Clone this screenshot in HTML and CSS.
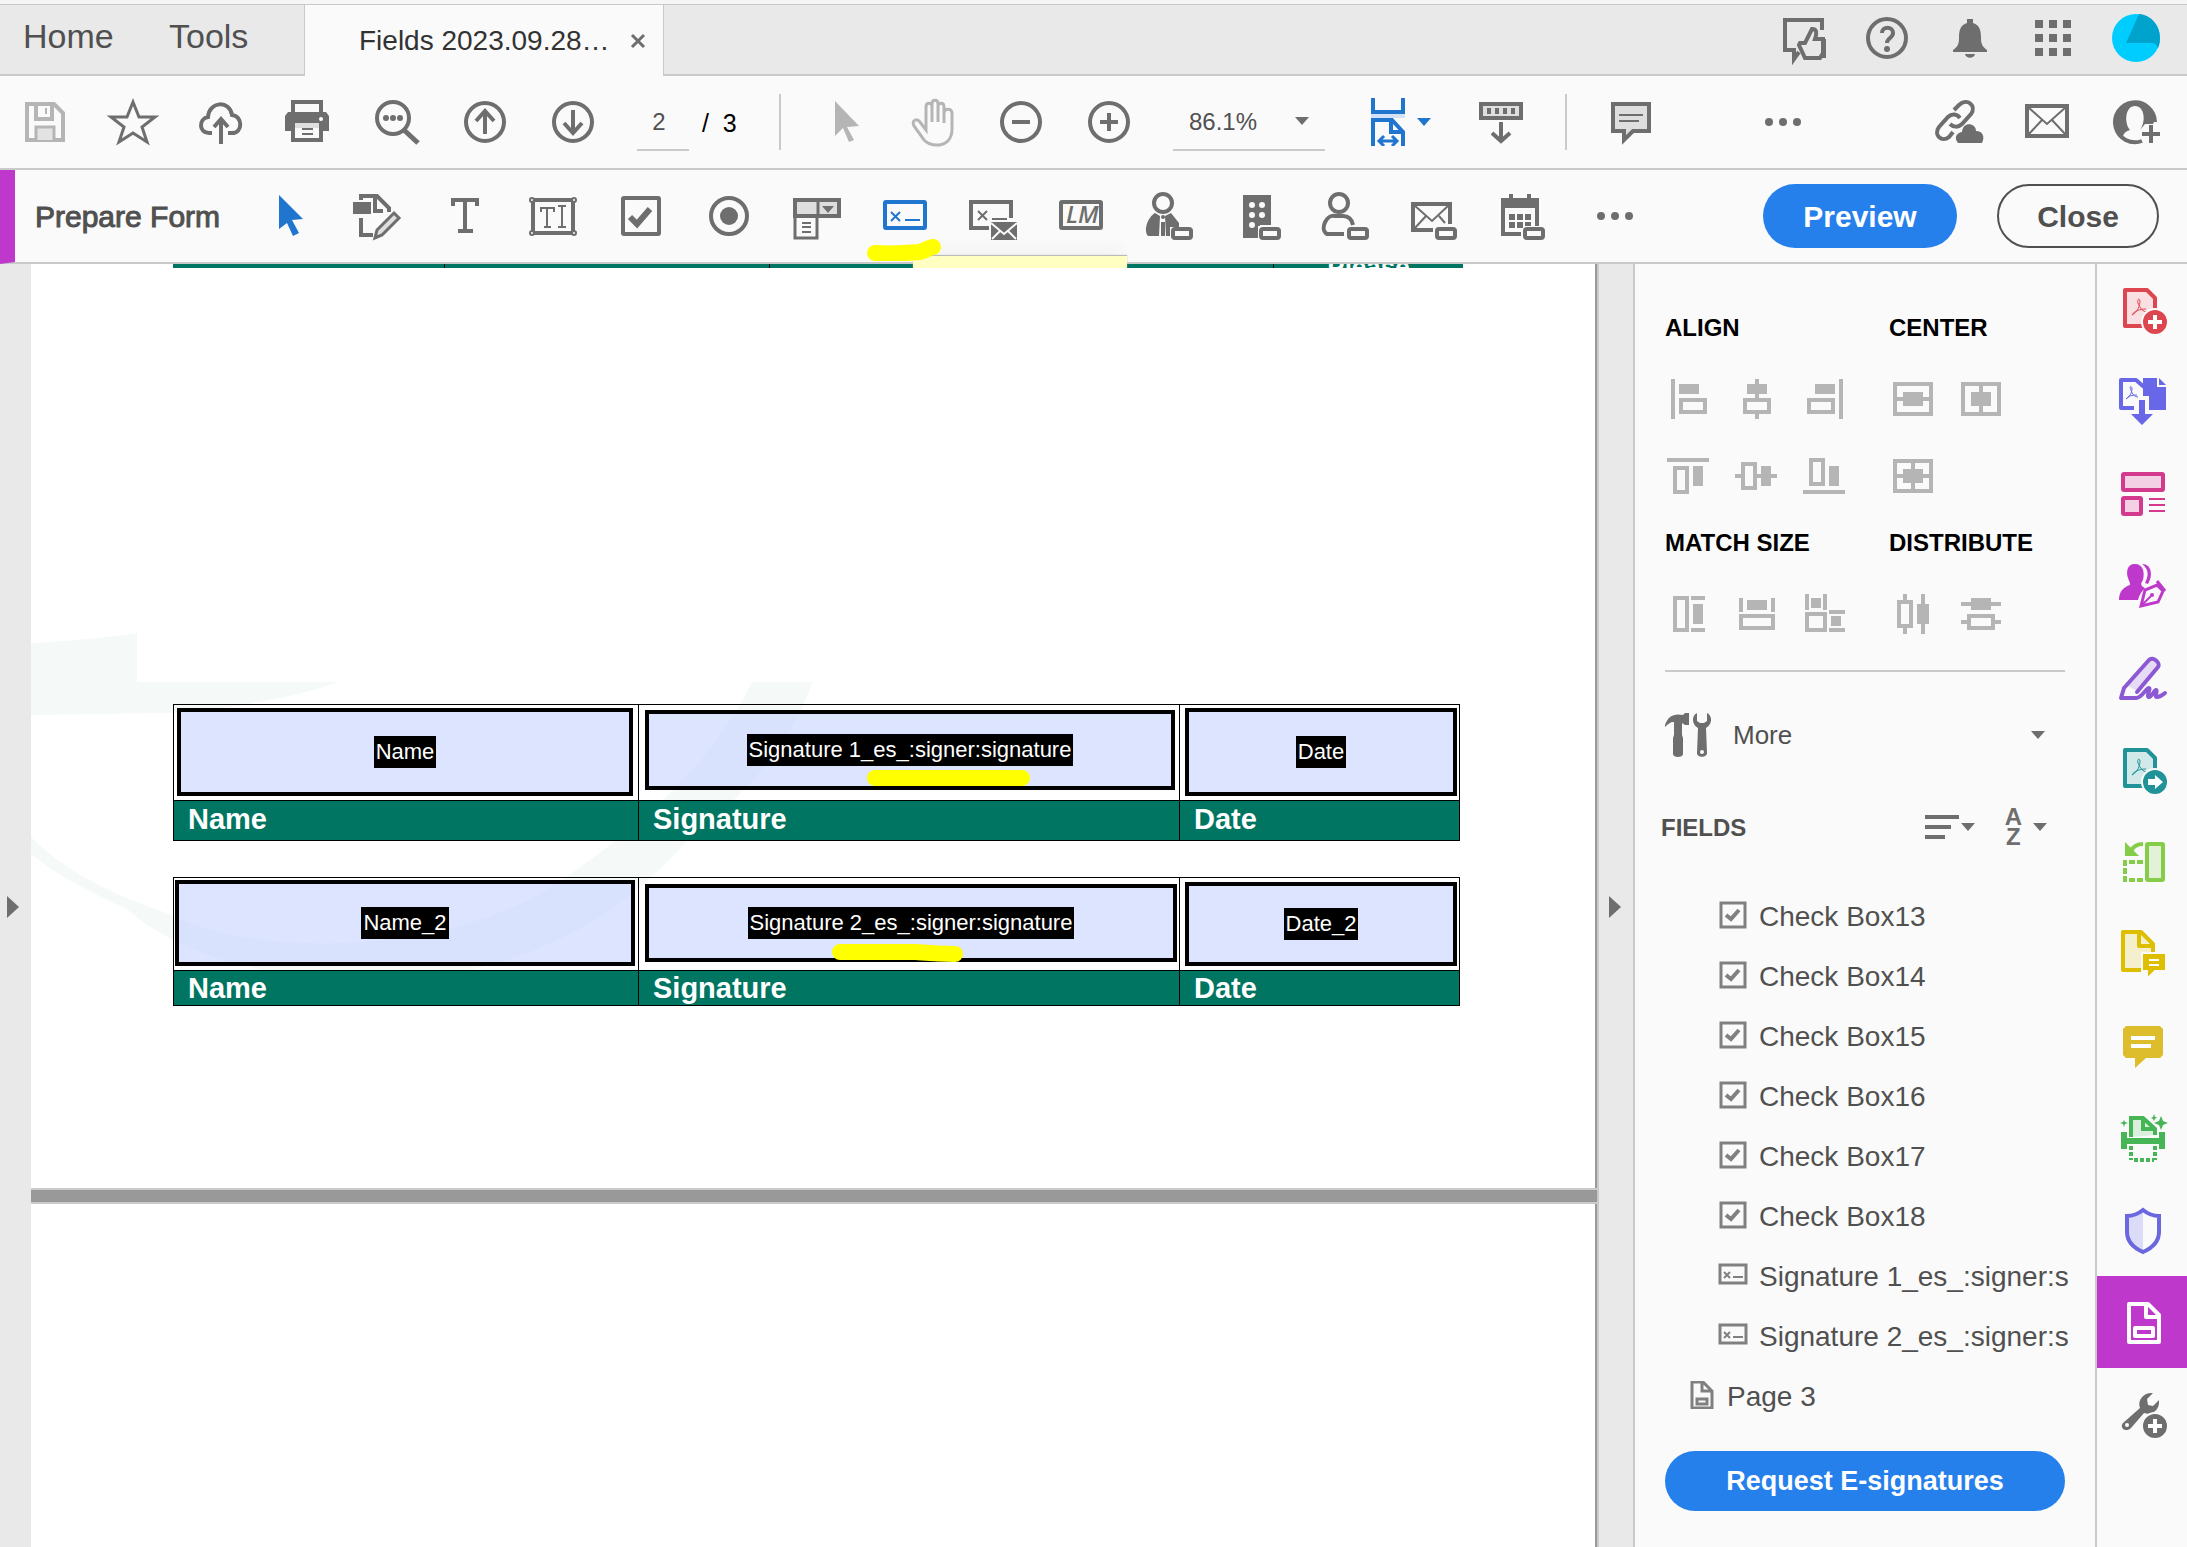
FILE: index.html
```html
<!DOCTYPE html>
<html lang="en">
<head>
<meta charset="utf-8">
<title>Fields 2023.09.28 - Prepare Form</title>
<link rel="stylesheet" href="styles.css">
</head>
<body>
<header class="tabbar">
  <nav class="tabs">
    <a class="nav-link home" href="#">Home</a>
    <a class="nav-link" href="#">Tools</a>
    <div class="doc-tab"><span>Fields 2023.09.28…</span>
      <button class="tab-close" aria-label="Close tab"><svg width="16" height="16" viewBox="0 0 16 16" class="ln"><path d="M2 2l12 12M14 2L2 14" stroke-width="3"/></svg></button>
    </div>
  </nav>
  <div class="account">
    <button aria-label="Feedback"><svg class="ico ln" viewBox="0 0 48 48"><path d="M42 16V6H5v30h9v9l5-7"/><path d="M20 29h5l7-14c5 0 5 4 3 10h8v14l-3 5H25l-6-13z"/><path d="M43 25h3v19h-5z" class="fl"/></svg></button>
    <button aria-label="Help"><svg class="ico ln" viewBox="0 0 48 48"><circle cx="24" cy="24" r="19"/><path d="M19 19c0-7 11-7 11 0 0 5-6 5-6 10"/><circle cx="24" cy="35" r="3" class="fl"/></svg></button>
    <button aria-label="Notifications"><svg class="ico fl" viewBox="0 0 48 48"><path d="M21 5h6v4c7 2 8 8 8 15 0 7 2 9 6 12v2H7v-2c4-3 6-5 6-12 0-7 1-13 8-15zM19 40h10c-1 5-9 5-10 0z"/></svg></button>
    <button aria-label="Apps"><svg class="ico fl" viewBox="0 0 48 48"><path d="M6 6h8v8H6zM20 6h8v8h-8zM34 6h8v8h-8zM6 20h8v8H6zM20 20h8v8h-8zM34 20h8v8h-8zM6 34h8v8H6zM20 34h8v8h-8zM34 34h8v8h-8z"/></svg></button>
    <button aria-label="Profile"><svg class="ico" viewBox="0 0 48 48"><circle cx="24" cy="24" r="24" fill="#00cdff"/><path d="M27 0c12 1 21 11 21 24 0 4-1 8-2 10-1-3-3-5-6-5H14z" fill="#00a3cc"/></svg></button>
  </div>
</header>

<div class="toolbar">
  <button aria-label="Save"><svg class="ico ln pale" viewBox="0 0 48 48"><path d="M7 6h27l9 9v27H7z"/><path d="M16 6v15h16V6" /><path d="M16 42V29h18v13" fill="#e3e3e3" stroke-width="3"/><path d="M26 10v6" stroke-width="2"/></svg></button>
  <button aria-label="Star"><svg class="ico ln" viewBox="0 0 48 48"><path d="M25 4l6 15h16L34 29l5 15-14-9-14 9 5-15L3 19h16z" stroke-width="3"/></svg></button>
  <button aria-label="Upload to cloud"><svg class="ico ln" viewBox="0 0 48 48"><path d="M16 35h-3c-10 0-11-14-1-16C13 3 34 2 36 17c11 1 11 18 0 18h-4"/><path d="M25 46V22M18 29l7-8 7 8"/></svg></button>
  <button aria-label="Print"><svg class="ico" viewBox="0 0 48 48"><path d="M9 16V4h28v12" class="ln"/><path d="M1 18l3-4h38l3 4v15h-8v-8H9v8H1z" class="fl"/><path d="M9 25h28v17H9z" class="ln"/><path d="M11 25h24v5H11z" fill="#dedede"/><path d="M18 31h11M18 36h11" class="ln thin"/><circle cx="37" cy="21" r="2" fill="#fff"/></svg></button>
  <button aria-label="Find"><svg class="ico ln" viewBox="0 0 48 48"><circle cx="21" cy="20" r="16"/><path d="M32 32l14 13" stroke-width="5"/><g class="fl"><circle cx="14" cy="20" r="3"/><circle cx="21" cy="20" r="3"/><circle cx="28" cy="20" r="3"/></g></svg></button>
  <button aria-label="Previous page"><svg class="ico ln" viewBox="0 0 48 48"><circle cx="25" cy="24" r="19"/><path d="M25 36V14M16 23l9-10 9 10"/></svg></button>
  <button aria-label="Next page"><svg class="ico ln" viewBox="0 0 48 48"><circle cx="25" cy="24" r="19"/><path d="M25 12v22M16 25l9 10 9-10"/></svg></button>
  <input class="page-no" aria-label="Page number" value="2">
  <span class="page-total">/&nbsp; 3</span>
  <i class="rule"></i>
  <button aria-label="Select"><svg class="ico" viewBox="0 0 48 48"><path d="M13 3l24 25-12 1 7 13-5 2-6-14-8 8z" fill="#b5b5b5"/></svg></button>
  <button aria-label="Pan"><svg class="ico ln pale" viewBox="0 0 48 48"><path d="M16 26V9c0-5 6-5 6 0v15M22 10V6c0-5 6-5 6 0v18M28 9c0-5 6-5 6 0v16M34 15c0-5 8-5 8 0v16c0 21-25 19-30 8L4 28c-3-6 3-8 6-4l6 8V13" stroke-width="3"/></svg></button>
  <button aria-label="Zoom out"><svg class="ico ln" viewBox="0 0 48 48"><circle cx="23" cy="24" r="19"/><path d="M14 24h18"/></svg></button>
  <button aria-label="Zoom in"><svg class="ico ln" viewBox="0 0 48 48"><circle cx="23" cy="24" r="19"/><path d="M14 24h18M23 15v18"/></svg></button>
  <div class="zoom"><select aria-label="Zoom level"><option>86.1%</option></select><svg class="caret" viewBox="0 0 14 8"><path d="M0 0h14L7 8z"/></svg></div>
  <button class="fit" aria-label="Fit width"><svg width="34" height="48" viewBox="0 0 34 48" fill="none" stroke="#2075cf" stroke-width="4"><path d="M0 18h34" stroke="#d3e3f5"/><path d="M2 0v14h30V0M2 48V22h19l11 12v14M20 22v12h12"/><path d="M9 43h16M13 38l-5 5 5 5M21 38l5 5-5 5" stroke-width="3"/></svg><svg class="caret blue" viewBox="0 0 14 8"><path d="M0 0h14L7 8z"/></svg></button>
  <button class="scrollbtn" aria-label="Scrolling"><svg class="ico ln" viewBox="0 0 48 48"><path d="M4 6h40v14H4z" fill="#dedede"/><path d="M12 10v6M20 10v6M28 10v6M36 10v6M24 24v19M15 35l9 8 9-8"/></svg></button>
  <i class="rule second"></i>
  <button aria-label="Comment"><svg class="ico ln" viewBox="0 0 48 48"><path d="M6 6h36v27H26l-9 9v-9H6z" fill="#dedede"/><path d="M12 17h24M12 23h20" stroke-width="2"/></svg></button>
  <button class="more-dots" aria-label="More tools"><svg class="ico fl" viewBox="0 0 48 48"><circle cx="10" cy="24" r="4"/><circle cx="24" cy="24" r="4"/><circle cx="38" cy="24" r="4"/></svg></button>
  <div class="share">
    <button aria-label="Share link"><svg class="ico ln" viewBox="0 0 48 48"><path d="M19 12l5-5c8-8 18 1 12 9l-9 10c-4 4-9 3-12 0"/><path d="M18 34l-4 5c-7 6-16-2-10-10l9-10c4-4 9-3 12 1"/><path d="M23 45c-5-6 0-11 4-11 1-11 14-9 14-1 7 0 9 6 6 12z" class="fl"/></svg></button>
    <button aria-label="Send mail"><svg class="ico ln" viewBox="0 0 48 48"><path d="M4 8h40v30H4z"/><path d="M5 9l19 17L43 9M5 37l14-15M43 37L29 22" stroke-width="2"/></svg></button>
    <button aria-label="Add people"><svg class="ico ln" viewBox="0 0 48 48"><path d="M31 43a20 20 0 1 1 13-19"/><path d="M24 4C9 4 4 17 4 25c1 7 4 11 8 13 1-3 3-5 7-6-6-7-5-24 5-24s11 16 5 24l5-6h8l2-4C44 14 37 5 24 4z" class="fl"/><path d="M40 27v18M31 36h18" /></svg></button>
  </div>
</div>

<div class="toolbar form-bar">
  <h1>Prepare Form</h1>
  <button aria-label="Select object"><svg class="ico" viewBox="0 0 48 48"><path d="M14 3l24 24-11 1 7 13-6 3-6-13-8 6z" fill="#2075cf"/></svg></button>
  <button aria-label="Edit"><svg class="ico ln" viewBox="0 0 48 48"><path d="M8 8V4h16l12 12v4M22 4v15h8M8 26v17h12"/><path d="M0 10h18v12H0z" class="fl"/><path d="M24 38l17-17 5 5-17 17-7 3z" fill="#dedede" stroke-width="3"/></svg></button>
  <button aria-label="Text"><svg class="ico ln" viewBox="0 0 48 48"><path d="M12 14V8h24v6M24 8v31M17 39h15"/></svg></button>
  <button aria-label="Text field"><svg class="ico ln" viewBox="0 0 48 48"><path d="M4 8h40v33H4z"/><path d="M12 20v-4h13v4M18 16v19M15 35h7M29 14h8M29 35h8M33 14v21" stroke-width="2"/><g fill="#fafafa" stroke-width="2"><circle cx="3" cy="8" r="2"/><circle cx="45" cy="8" r="2"/><circle cx="3" cy="41" r="2"/><circle cx="45" cy="41" r="2"/></g></svg></button>
  <button aria-label="Check box"><svg class="ico ln" viewBox="0 0 48 48"><rect x="6" y="6" width="36" height="36" rx="1"/><path d="M13 25l7 7 13-15" stroke-width="6"/></svg></button>
  <button aria-label="Radio button"><svg class="ico ln" viewBox="0 0 48 48"><circle cx="24" cy="24" r="18"/><circle cx="24" cy="24" r="9" class="fl"/></svg></button>
  <button aria-label="Dropdown"><svg class="ico ln" viewBox="0 0 48 48"><path d="M2 8h44v16H2z" fill="#dedede"/><path d="M2 24v22h22V24M25 8v16" stroke-width="3"/><path d="M9 31h9M9 35h9M9 40h9" stroke-width="2"/><path d="M29 14h12l-6 7z" class="fl"/></svg></button>
  <button class="sig-tool" aria-label="Signature"><svg class="ico" viewBox="0 0 48 48" fill="none" stroke="#2075cf" stroke-width="4"><rect x="4" y="10" width="40" height="26" rx="1"/><path d="M10 20l9 9M19 20l-9 9M24 28h15" stroke-width="2"/></svg>
    <svg class="marker" viewBox="0 0 78 22"><path d="M10 14c17 1 34 0 44-1 6-1 8-4 14-5" /></svg>
  </button>
  <button aria-label="E-signature by mail"><svg class="ico ln" viewBox="0 0 48 48"><path d="M20 36H2V10h40v16"/><path d="M9 19l9 9M18 19l-9 9M23 27h15" stroke-width="2"/><path d="M22 30h26v18H22z" class="fl"/><path d="M22 31l13 11 13-11M23 47l8-8M47 47l-8-8" stroke="#fafafa" stroke-width="2"/></svg></button>
  <button aria-label="Initials"><svg class="ico ln" viewBox="0 0 48 48"><rect x="4" y="10" width="40" height="26" rx="1"/><text x="9" y="31" class="lm">LM</text></svg></button>
  <button aria-label="Title"><svg class="ico ln" viewBox="0 0 48 48"><ellipse cx="18" cy="11" rx="9" ry="9"/><path d="M10 21l5 3-1 20H3c-5-6 0-19 7-23zM26 21l8 10v4h-9v9h-4l-1-20z" class="fl"/><path d="M18 30v14"/><circle cx="18" cy="25" r="2" class="fl"/><rect x="28" y="37" width="18" height="9" rx="2" fill="#fafafa"/></svg></button>
  <button aria-label="Company"><svg class="ico ln" viewBox="0 0 48 48"><path d="M10 3h28v30H27v13H10z" class="fl"/><g fill="#fafafa" stroke="none"><circle cx="19" cy="13" r="3"/><circle cx="29" cy="13" r="3"/><circle cx="19" cy="23" r="3"/><circle cx="29" cy="23" r="3"/><circle cx="19" cy="33" r="3"/></g><rect x="25" y="34" width="24" height="14" fill="#fafafa" stroke="none"/><rect x="28" y="37" width="18" height="9" rx="2"/></svg></button>
  <button aria-label="Name"><svg class="ico ln" viewBox="0 0 48 48"><ellipse cx="18" cy="11" rx="9" ry="9"/><path d="M23 42H6c-8-5 0-20 8-18h8c6 0 9 4 10 9"/><rect x="28" y="37" width="18" height="9" rx="2"/></svg></button>
  <button aria-label="Email"><svg class="ico ln" viewBox="0 0 48 48"><path d="M24 38H4V12h37v20"/><path d="M5 13l18 16 17-16M5 37l12-13M30 24l6 7" stroke-width="2"/><rect x="28" y="37" width="18" height="9" rx="2"/></svg></button>
  <button aria-label="Date"><svg class="ico ln" viewBox="0 0 48 48"><path d="M24 42H6V8h34v26"/><path d="M5 7h36v9H5zM12 22h6v6h-6zM20 22h6v6h-6zM28 22h6v6h-6zM12 30h6v6h-6zM20 30h6v6h-6zM28 30h6v4h-6z" class="fl"/><path d="M14 2v7M32 2v7"/><rect x="28" y="37" width="18" height="9" rx="2" fill="#fafafa"/></svg></button>
  <button class="form-dots" aria-label="More fields"><svg class="ico fl" viewBox="0 0 48 48"><circle cx="10" cy="24" r="4"/><circle cx="24" cy="24" r="4"/><circle cx="38" cy="24" r="4"/></svg></button>
  <div class="actions">
    <button class="pill primary">Preview</button>
    <button class="pill outline">Close</button>
  </div>
  <div class="tip"></div>
</div>

<main class="work">
  <button class="gutter left" aria-label="Show navigation pane"><svg width="12" height="22" viewBox="0 0 12 22" class="fl"><path d="M0 0l12 11L0 22z"/></svg></button>
  <section class="doc">
    <article class="page">
      <svg class="watermark" width="1000" height="760" viewBox="0 0 1000 760" fill="#f5faf9"><path d="M0 379q60-3 106-10v49h201c-50 18-120 28-169 31L0 451zM721 418h61C750 500 700 540 657 576c-40 44-90 90-180 120-130 40-300 20-380-50-40-20-65-30-97-56v-17c40 40 90 60 141 78 90 45 290 40 397-40C640 540 690 480 721 418z"/></svg>
      <div class="strip"><i></i><i></i><i></i><b>Please</b></div>
      <table class="sign first">
        <colgroup><col class="c-name"><col class="c-sig"><col></colgroup>
        <tbody>
          <tr><td class="a"><div class="field"><span>Name</span></div></td>
            <td class="b"><div class="field"><span>Signature 1_es_:signer:signature</span><svg class="hl one" viewBox="0 0 165 18"><path d="M9 9h147"/></svg></div></td>
            <td class="c"><div class="field"><span>Date</span></div></td></tr>
          <tr><th>Name</th><th>Signature</th><th>Date</th></tr>
        </tbody>
      </table>
      <table class="sign second">
        <colgroup><col class="c-name"><col class="c-sig"><col></colgroup>
        <tbody>
          <tr><td class="a"><div class="field"><span>Name_2</span></div></td>
            <td class="b"><div class="field"><span>Signature 2_es_:signer:signature</span><svg class="hl two" viewBox="0 0 131 20"><path d="M8 9h76c12 1 18 2 39 2"/></svg></div></td>
            <td class="c"><div class="field"><span>Date_2</span></div></td></tr>
          <tr><th>Name</th><th>Signature</th><th>Date</th></tr>
        </tbody>
      </table>
    </article>
    <div class="page-gap"></div>
    <article class="page next"></article>
  </section>
  <button class="gutter right" aria-label="Hide tools pane"><svg width="12" height="22" viewBox="0 0 12 22" class="fl"><path d="M0 0l12 11L0 22z"/></svg></button>

  <aside class="panel">
    <div class="arrange">
      <section><h2>ALIGN</h2>
        <div class="icons">
          <svg class="ico g" viewBox="0 0 48 48"><path d="M8 4v40"/><path d="M14 9h20v10H14z" class="s"/><path d="M16 25h24v12H16z"/></svg>
          <svg class="ico g" viewBox="0 0 48 48"><path d="M24 4v19M24 39v5"/><path d="M14 9h20v10H14z" class="s"/><path d="M12 25h24v12H12z"/></svg>
          <svg class="ico g" viewBox="0 0 48 48"><path d="M40 4v40"/><path d="M14 9h20v10H14z" class="s"/><path d="M8 25h24v12H8z"/></svg>
          <svg class="ico g" viewBox="0 0 48 48"><path d="M2 8h42M10 16h12v24H10z"/><path d="M28 14h10v20H28z" class="s"/></svg>
          <svg class="ico g" viewBox="0 0 48 48"><path d="M2 24h8M24 24h20M10 12h12v24H10z"/><path d="M28 14h10v20H28z" class="s"/></svg>
          <svg class="ico g" viewBox="0 0 48 48"><path d="M2 40h42M10 8h12v24H10z"/><path d="M28 14h10v20H28z" class="s"/></svg>
        </div></section>
      <section><h2>CENTER</h2>
        <div class="icons">
          <svg class="ico g" viewBox="0 0 48 48"><path d="M6 9h36v30H6zM6 24h36"/><path d="M14 17h20v14H14z" class="s"/></svg>
          <svg class="ico g" viewBox="0 0 48 48"><path d="M6 9h36v30H6zM24 9v30"/><path d="M14 17h20v14H14z" class="s"/></svg>
          <svg class="ico g" viewBox="0 0 48 48"><path d="M6 9h36v30H6zM24 9v30M6 24h36"/><path d="M14 17h20v14H14z" class="s"/></svg>
        </div></section>
      <section><h2>MATCH SIZE</h2>
        <div class="icons">
          <svg class="ico g" viewBox="0 0 48 48"><path d="M10 8h12v32H10zM26 8h14M26 40h14"/><path d="M28 14h10v20H28z" class="s"/></svg>
          <svg class="ico g" viewBox="0 0 48 48"><path d="M8 8v14M40 8v14M8 26h32v12H8z"/><path d="M14 10h20v10H14z" class="s"/></svg>
          <svg class="ico g" viewBox="0 0 48 48"><path d="M6 4v16M24 4v16M6 24h18v16H6zM28 22h16M28 40h16"/><path d="M10 8h10v10H10zM30 26h10v10H30z" class="s"/></svg>
        </div></section>
      <section><h2>DISTRIBUTE</h2>
        <div class="icons">
          <svg class="ico g" viewBox="0 0 48 48"><path d="M10 12h12v24H10zM16 4v8M16 36v8M34 4v40"/><path d="M28 14h12v20H28z" class="s"/></svg>
          <svg class="ico g" viewBox="0 0 48 48"><path d="M4 14h40M4 32h8M36 32h8M12 26h24v12H12z"/><path d="M14 8h20v12H14z" class="s"/></svg>
        </div></section>
    </div>
    <button class="more"><svg width="46" height="44" viewBox="0 0 46 44" class="fl"><path d="M0 12C3 3 9 0 18 2l2-2h4v12h-4l-3-2v12l1 3v16c0 4-10 4-10 0V25l1-3V9C5 9 3 11 0 14zM32 0c-6 3-5 12 1 15l-1 25c0 5 10 5 10 0l-1-25c6-3 7-12 1-15v8l-3 2h-4l-3-2z"/><circle cx="37" cy="39" r="2" fill="#fafafa"/></svg><span>More</span><svg class="caret" viewBox="0 0 14 8"><path d="M0 0h14L7 8z"/></svg></button>
    <div class="fields-head"><h2>FIELDS</h2>
      <button class="sort" aria-label="Field order"><svg width="34" height="24" viewBox="0 0 34 24" class="ln"><path d="M0 2h34M0 12h26M0 22h20"/></svg><svg class="caret" viewBox="0 0 14 8"><path d="M0 0h14L7 8z"/></svg></button>
      <button class="az" aria-label="Sort A to Z"><span>A<br>Z</span><svg class="caret" viewBox="0 0 14 8"><path d="M0 0h14L7 8z"/></svg></button>
    </div>
    <ul class="tree">
      <li><svg class="mini" viewBox="0 0 30 28"><path d="M3 2h24v24H3z"/><path d="M8 14l5 4 8-9" stroke-width="4"/></svg>Check Box13</li>
      <li><svg class="mini" viewBox="0 0 30 28"><path d="M3 2h24v24H3z"/><path d="M8 14l5 4 8-9" stroke-width="4"/></svg>Check Box14</li>
      <li><svg class="mini" viewBox="0 0 30 28"><path d="M3 2h24v24H3z"/><path d="M8 14l5 4 8-9" stroke-width="4"/></svg>Check Box15</li>
      <li><svg class="mini" viewBox="0 0 30 28"><path d="M3 2h24v24H3z"/><path d="M8 14l5 4 8-9" stroke-width="4"/></svg>Check Box16</li>
      <li><svg class="mini" viewBox="0 0 30 28"><path d="M3 2h24v24H3z"/><path d="M8 14l5 4 8-9" stroke-width="4"/></svg>Check Box17</li>
      <li><svg class="mini" viewBox="0 0 30 28"><path d="M3 2h24v24H3z"/><path d="M8 14l5 4 8-9" stroke-width="4"/></svg>Check Box18</li>
      <li><svg class="mini" viewBox="0 0 30 28"><path d="M2 4h26v18H2z"/><path d="M6 11l6 6M12 11l-6 6M15 16h10" stroke-width="2"/></svg>Signature 1_es_:signer:s</li>
      <li><svg class="mini" viewBox="0 0 30 28"><path d="M2 4h26v18H2z"/><path d="M6 11l6 6M12 11l-6 6M15 16h10" stroke-width="2"/></svg>Signature 2_es_:signer:s</li>
      <li class="pg"><svg class="mini" viewBox="0 0 30 28"><path d="M5 1h11l9 9v17H5zM15 1v9h9M10 18h10v5H10z"/></svg>Page 3</li>
    </ul>
    <button class="request">Request E-signatures</button>
  </aside>

  <nav class="rail">
    <a href="#" aria-label="Create PDF"><svg class="ico" viewBox="0 0 48 48" fill="none" stroke="#de464f" stroke-width="4"><path d="M7 4h22l8 8v28H7z" fill="#f9dfe1" stroke-linejoin="round"/><path d="M14 29c6-3 8-10 8-14-1-4-3-1-2 2 2 5 5 9 9 9M14 29c2-4 8-6 14-6" stroke-width="1"/><circle cx="37" cy="36" r="13" fill="#de464f" stroke="#fafafa" stroke-width="2"/><path d="M37 29v14M30 36h14" stroke="#fff"/></svg></a>
    <a href="#" aria-label="Export PDF"><svg class="ico" viewBox="0 0 48 48" fill="none" stroke="#6767e8" stroke-width="4"><path d="M16 30H3V2h15l8 7" stroke-linejoin="round"/><path d="M8 21c5-3 6-8 6-11-1-3-3-1-1 2 1 4 4 7 7 7M8 21c2-3 6-4 11-4" stroke-width="1"/><path d="M25 0h14v9h9v23H31V18h-6z" fill="#6767e8" stroke="none"/><path d="M41 0l7 7h-7z" fill="#6767e8" stroke="none"/><path d="M21 22h6v14h8L24 47 13 36h8z" fill="#6767e8" stroke="none"/></svg></a>
    <a href="#" aria-label="Organize pages"><svg class="ico" viewBox="0 0 48 48" fill="#f3d0e4" stroke="#d3398d" stroke-width="4"><rect x="5" y="4" width="40" height="16" rx="1"/><rect x="5" y="28" width="18" height="16" rx="1"/><path d="M31 29h16M31 35h16M31 41h16" stroke-width="2"/></svg></a>
    <a href="#" aria-label="Request signatures"><svg class="ico" viewBox="0 0 48 48" fill="#bf38cc"><path d="M17 2c-8 0-9 8-7 14 1 3 2 4 2 7-6 2-11 6-11 15h19c1-5 4-9 7-12-4-2-5-4-2-8C27 10 25 2 17 2zM24 2c10 0 11 12 6 20l-3-1c3-6 5-13-3-19z"/><path d="M23 44l4-16 12-5 6 6-5 11zM39 19l8 10" fill="#fafafa" stroke="#bf38cc" stroke-width="3"/><path d="M24 43l9-9" stroke="#bf38cc" stroke-width="2"/><circle cx="34" cy="33" r="2"/></svg></a>
    <a href="#" aria-label="Fill and sign"><svg class="ico" viewBox="0 0 48 48" fill="none" stroke="#8d58d3" stroke-width="4" stroke-linejoin="round" stroke-linecap="round"><path d="M10 32L30 7c4-5 15 2 10 8L21 38z" fill="#e6dbf5" stroke="none"/><path d="M19 38l21-25c3-4-5-11-9-7L6 34 3 44h15c6 0 10-10 13-10 2 0-3 9 0 9s5-7 7-7-2 7 1 7 4-1 8-4"/></svg></a>
    <a href="#" aria-label="Send for review"><svg class="ico" viewBox="0 0 48 48" fill="none" stroke="#1f9398" stroke-width="4"><path d="M7 4h22l8 8v28H7z" fill="#d2e9ea" stroke-linejoin="round"/><path d="M14 29c6-3 8-10 8-14-1-4-3-1-2 2 2 5 5 9 9 9M14 29c2-4 8-6 14-6" stroke-width="1"/><circle cx="37" cy="36" r="13" fill="#1f9398" stroke="#fafafa" stroke-width="2"/><path d="M30 33h7v-4l8 7-8 7v-4h-7z" fill="#fff" stroke="none"/></svg></a>
    <a href="#" aria-label="Compare files"><svg class="ico" viewBox="0 0 48 48" fill="none" stroke="#85cd48" stroke-width="4"><rect x="29" y="6" width="16" height="36" rx="1" fill="#e3f1d6"/><path d="M7 22v22" stroke-dasharray="6 2"/><path d="M11 24h14M11 42h14" stroke-dasharray="6 2"/><path d="M25 6c-7 0-10 3-12 7" /><path d="M7 4v14h14z" fill="#85cd48" stroke="none"/></svg></a>
    <a href="#" aria-label="Share for comments"><svg class="ico" viewBox="0 0 48 48" fill="none" stroke="#debf00" stroke-width="4"><path d="M5 2h18l12 12v26H5z" fill="#f5efcd" stroke-linejoin="round"/><path d="M21 2v14h14" stroke-linejoin="round"/><path d="M24 23h24v18H37l-8 8v-8h-5z" fill="#debf00" stroke="#fafafa" stroke-width="2"/><path d="M31 30h10M31 35h10" stroke="#fff" stroke-width="2"/></svg></a>
    <a href="#" aria-label="Comment"><svg class="ico" viewBox="0 0 48 48" fill="#debd2d"><path d="M8 4h34l3 3v26l-3 3H28L17 46V36H8l-3-3V7z"/><path d="M13 16h24M13 24h20" stroke="#fff" stroke-width="4"/></svg></a>
    <a href="#" aria-label="Scan and OCR"><svg class="ico" viewBox="0 0 48 48" fill="none" stroke="#46b556" stroke-width="4"><path d="M13 23V4h12l12 11v6" fill="#daf0dd"/><path d="M25 4v11h12" /><path d="M3 18h6v6h32v-6h6v17h-6v-5H9v5H3z" fill="#46b556" stroke="none"/><path d="M13 32v14M37 32v14M16 46h20" stroke-dasharray="4 2"/><path d="M43 2l2 5 5 2-5 2-2 5-2-5-5-2 5-2zM6 6l1 2 3 1-3 1-1 3-1-3-3-1 3-1zM36 0l1 3 2 0-2 2-1 2-1-2-2-1 2-1z" fill="#46b556" stroke="none"/></svg></a>
    <a href="#" aria-label="Protect"><svg class="ico" viewBox="0 0 48 48" fill="none" stroke="#6a67df" stroke-width="4"><path d="M25 5v41C14 41 9 35 9 26V11c6 0 11-2 16-6z" fill="#dcdcf8" stroke="none"/><path d="M25 4c5 4 10 6 16 6v16c0 10-7 16-16 20C16 42 9 36 9 26V10c6 0 11-2 16-6z"/></svg></a>
    <a href="#" class="on" aria-label="Prepare form"><svg class="ico" viewBox="0 0 48 48" fill="none" stroke="#fff" stroke-width="4" stroke-linejoin="round"><path d="M11 6h19l11 11v27H11zM28 6v13h13M17 30h18v8H17z"/></svg></a>
    <a href="#" aria-label="More tools"><svg class="ico fl" viewBox="0 0 48 48"><path d="M35 3c-9-1-16 7-13 15L5 33c-4 5 3 10 8 5l13-15c8 3 16-3 15-13l-6 6-5-1-1-6z"/><circle cx="9" cy="35" r="2" fill="#fafafa"/><circle cx="37" cy="36" r="13" stroke="#fafafa" stroke-width="2"/><path d="M37 29v14M30 36h14" stroke="#fff" stroke-width="4"/></svg></a>
  </nav>
</main>
</body>
</html>
```
FILE: styles.css
```css
* { box-sizing: border-box; }
body {
  margin: 0;
  min-height: 100vh;
  display: flex;
  flex-direction: column;
  background: #fafafa;
  color: #505050;
  font-family: "Liberation Sans", Arial, sans-serif;
  font-size: 28px;
  overflow-x: hidden;
}
button {
  border: 0;
  padding: 0;
  background: none;
  color: inherit;
  font: inherit;
  display: flex;
  align-items: center;
  justify-content: center;
}
a { color: inherit; text-decoration: none; }
h1, h2, ul { margin: 0; padding: 0; }
h2 { font-size: 24px; line-height: 28px; color: #000; }
svg { display: block; flex: none; }

/* Icons */
.ico { width: 48px; height: 48px; overflow: visible; }
.ln { fill: none; stroke: #6e6e6e; stroke-width: 4; }
.ln.pale { stroke: #b5b5b5; }
.ln.thin { stroke-width: 2; }
.fl { fill: #6e6e6e; stroke: none; }
.g { fill: none; stroke: #b5b5b5; stroke-width: 4; }
.g .s { fill: #b5b5b5; stroke: none; }
.lm { font-size: 24px; font-style: italic; font-weight: 600; fill: #6e6e6e; stroke: none; font-family: "Open Sans", sans-serif; }
.caret { width: 14px; height: 8px; fill: #6e6e6e; }
.caret.blue { fill: #2075cf; }

/* Tab bar */
.tabbar {
  display: flex;
  justify-content: space-between;
  height: 76px;
  border-top: 4px solid #f6f6f6;
  background: #e9e9e9;
  box-shadow: inset 0 1px #c8c8c8, inset 0 -2px #cacaca;
}
.tabs { display: flex; }
.nav-link { font-size: 34px; line-height: 65px; width: 135px; }
.nav-link.home { width: 169px; padding-left: 23px; }
.doc-tab {
  display: flex;
  align-items: center;
  justify-content: space-between;
  width: 360px;
  margin-top: 1px;
  padding: 0 17px 0 54px;
  border: solid #cacaca;
  border-width: 0 1px;
  background: #fafafa;
  color: #323232;
}
.account { display: flex; padding-right: 10px; height: 68px; }
.account button { width: 83px; }

/* Toolbars */
.toolbar {
  position: relative;
  display: flex;
  align-items: center;
  height: 94px;
  border-bottom: 2px solid #cacaca;
  background: #fafafa;
}
.toolbar > button, .share button { width: 88px; height: 92px; flex: none; }
.page-no {
  width: 52px;
  height: 58px;
  margin-left: 21px;
  padding: 2px 8px 0 0;
  border: 0;
  border-bottom: 2px solid #cacaca;
  background: none;
  color: #505050;
  font: inherit;
  font-size: 24px;
  text-align: center;
}
.page-total { width: 78px; padding: 2px 0 0 13px; color: #000; font-size: 25px; white-space: nowrap; }
.rule { width: 2px; height: 56px; margin: 0 21px 0 12px; background: #cacaca; }
.rule.second { margin: 0 20px; }
.zoom {
  display: flex;
  align-items: center;
  width: 152px;
  height: 58px;
  margin: 0 32px 0 19px;
  padding-right: 16px;
  border-bottom: 2px solid #cacaca;
}
.zoom select {
  flex: 1;
  appearance: none;
  border: 0;
  padding: 0 0 0 16px;
  background: none;
  color: #505050;
  font: inherit;
  font-size: 24px;
}
.toolbar .fit { gap: 12px; margin-right: 12px; }
.toolbar .more-dots { margin-left: 64px; }
.share { display: flex; margin-left: auto; padding-right: 8px; }

.form-bar { border-left: 15px solid #bf38cc; }
.form-bar h1 { width: 230px; padding: 2px 0 0 20px; font-size: 30px; font-weight: normal; white-space: nowrap; -webkit-text-stroke: 1px #505050; }
.sig-tool { position: relative; z-index: 2; }
.marker { position: absolute; left: 4px; top: 69px; width: 78px; height: 22px; }
.marker path, .hl path { fill: none; stroke: #ff0; stroke-width: 16; stroke-linecap: round; }
.form-bar .form-dots { width: 100px; }
.actions { display: flex; gap: 40px; margin-left: auto; padding-right: 28px; }
.pill { height: 64px; padding-top: 2px; border-radius: 32px; font-size: 30px; font-weight: bold; }
.primary { width: 194px; background: #2680eb; color: #fff; }
.outline { width: 162px; border: 2px solid #505050; }
.tip {
  position: absolute;
  left: 898px;
  top: 86px;
  width: 214px;
  height: 12px;
  z-index: 1;
  background: #ffffc1;
  box-shadow: 0 -1px 1px #bbb, 0 -8px 16px -4px rgba(0, 0, 0, .1);
}

/* Work area */
.work { flex: 1; display: grid; grid-template-columns: 31px minmax(0, 1fr) 38px 460px 92px; }
.gutter { background: #e9e9e9; }
.gutter.left { padding: 2px 5px 0 0; }
.gutter.right { border: solid #cacaca; border-width: 0 2px; padding: 2px 2px 0 0; }
.doc { display: flex; flex-direction: column; background: #999; }
.page { position: relative; background: #fff; border-right: 2px solid #999; min-height: 924px; }
.page.next { flex: 1; min-height: 0; }
.page-gap { height: 16px; border: solid #cacaca; border-width: 2px 0; background: #999; }
.watermark { position: absolute; left: 0; top: 0; }
.strip {
  position: relative;
  display: grid;
  grid-template-columns: 272px 325px 504px 1fr;
  height: 4px;
  margin: 0 132px 0 142px;
  overflow: hidden;
  background: #007662;
  color: #fff;
  font-size: 26px;
}
.strip i { border-right: 1px solid #000; }
.strip b { line-height: 18px; text-align: center; margin-top: -6px; }
.sign {
  position: relative;
  width: calc(100% - 277px);
  margin-left: 142px;
  table-layout: fixed;
  border-collapse: collapse;
}
.first { margin-top: 436px; }
.second { margin-top: 36px; }
.c-name { width: 465px; }
.c-sig { width: 541px; }
.sign td, .sign th { border: 1px solid #000; }
.sign td { padding: 0; vertical-align: top; }
.sign th {
  height: 40px;
  padding: 0 14px 3px;
  background: #007662;
  color: #fff;
  font-size: 29px;
  line-height: 32px;
  text-align: left;
}
.second th { height: 35px; padding-bottom: 0; }
.field {
  position: relative;
  display: flex;
  align-items: center;
  justify-content: center;
  height: 88px;
  margin: 3px 5px 4px 3px;
  border: 4px solid #000;
  background: rgba(193, 206, 255, .55);
}
.field span { padding: 0 2px; background: #000; color: #fff; font-size: 22px; line-height: 32px; white-space: nowrap; }
.b .field { height: 80px; margin: 5px 4px 10px 6px; }
.c .field { margin: 3px 2px 4px 5px; }
.second .a .field { height: 86px; margin: 2px 3px 4px 1px; }
.second .b .field { height: 78px; margin: 6px 2px 8px 6px; }
.second .c .field { height: 84px; margin: 4px 2px 4px 5px; }
.hl { position: absolute; overflow: visible; }
.hl.one { left: 217px; top: 55px; width: 165px; height: 18px; }
.hl.two { left: 183px; top: 55px; width: 131px; height: 20px; }

/* Right panel */
.panel { padding: 50px 30px 0 30px; background: #fafafa; }
.arrange {
  display: grid;
  grid-template-columns: 224px 1fr;
  row-gap: 29px;
  padding-bottom: 32px;
  border-bottom: 2px solid #cacaca;
}
.icons { display: grid; grid-template-columns: repeat(3, 68px); row-gap: 29px; padding-top: 33px; }
.arrange section:nth-child(2) .icons { grid-template-columns: repeat(2, 68px); }
.more { width: 100%; height: 64px; margin-top: 31px; padding-right: 20px; font-size: 26px; justify-content: flex-start; }
.more span { flex: 1; padding-left: 22px; text-align: left; }
.fields-head { display: flex; align-items: center; height: 60px; margin: 30px 18px 0 -4px; }
.fields-head h2 { flex: 1; padding-top: 1px; color: #505050; }
.sort { gap: 2px; margin-right: 30px; }
.az { gap: 11px; }
.az span { font-size: 24px; line-height: 20px; font-weight: bold; color: #6e6e6e; }
.tree { margin: 30px -6px 0 0; padding-left: 53px; list-style: none; overflow: hidden; }
.tree li { display: flex; align-items: center; gap: 11px; height: 60px; line-height: 32px; white-space: nowrap; }
.tree .pg { margin-left: -31px; gap: 10px; }
.mini { width: 30px; height: 28px; margin-bottom: 4px; fill: none; stroke: #808080; stroke-width: 3; }
.request { width: 100%; height: 60px; margin-top: 24px; border-radius: 30px; background: #2680eb; color: #fff; font-size: 27px; font-weight: bold; }

/* Tool rail */
.rail { border-left: 2px solid #cacaca; background: #fafafa; }
.rail a { display: flex; align-items: center; justify-content: center; height: 92px; }
.rail .on { background: #bf38cc; }
```
